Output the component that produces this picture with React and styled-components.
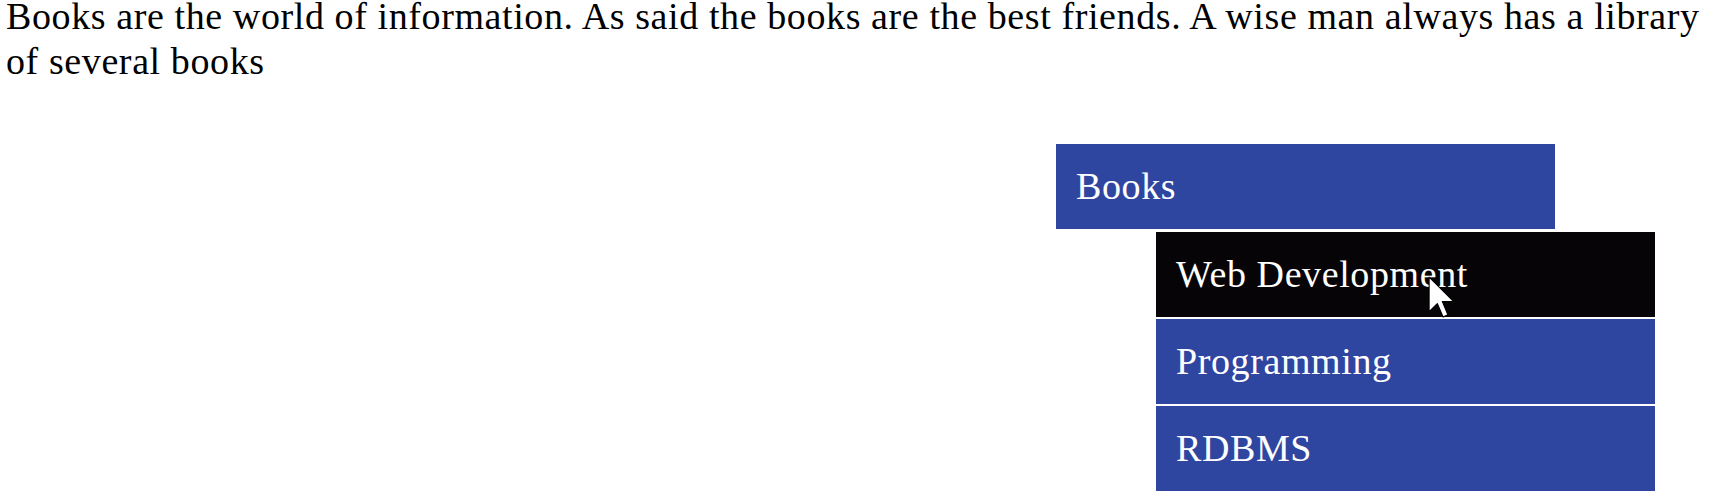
import React from 'react';
import styled, { createGlobalStyle } from 'styled-components';

const GlobalStyle = createGlobalStyle`
  html, body {
    margin: 0;
    padding: 0;
    background: #ffffff;
  }
  body {
    font-family: "Liberation Serif", "Times New Roman", serif;
    color: #000000;
    letter-spacing: 0.6px;
  }
`

const items = ['Web Development', 'Programming', 'RDBMS']

function App() {
  return (
    <Page>
      <GlobalStyle />
      <Intro>
        Books are the world of information. As said the books are the best friends. A wise man always has a library of several books
      </Intro>
      <MenuRow>
        <Menu>
          <MenuTitle>Books</MenuTitle>
          <SubMenu>
            {items.map((item, i) => (
              <SubItem key={item} active={i === 0}>
                {item}
                {i === 0 && <Pointer />}
              </SubItem>
            ))}
          </SubMenu>
        </Menu>
      </MenuRow>
    </Page>
  )
}

function Pointer() {
  return (
    <Cursor width="27" height="42" viewBox="0 0 12.5 19.5">
      <path
        d="M0.5 0.5 L0.5 16.5 L4.3 12.8 L7 19 L9.2 18 L6.6 11.8 L11.8 11.8 Z"
        fill="#ffffff"
        stroke="#000000"
        strokeWidth="0.5"
        strokeLinejoin="round"
      />
    </Cursor>
  )
}

const Page = styled.div`
  padding: 0 0 0 6px;
  overflow: hidden;
`

const Intro = styled.p`
  margin: -6px 0 0 0;
  padding-right: 8px;
  font-size: 38px;
  line-height: 45px;
`

const MenuRow = styled.div`
  display: flex;
  justify-content: flex-end;
  padding: 60px 70px 0 0;
`

const Menu = styled.div`
  width: 599px;
  display: flex;
  flex-direction: column;
`

const MenuTitle = styled.div`
  width: 499px;
  height: 85px;
  line-height: 85px;
  padding-left: 20px;
  box-sizing: border-box;
  background: #2f46a1;
  color: #ffffff;
  font-size: 38px;
`

const SubMenu = styled.div`
  margin: 3px 0 0 100px;
  display: flex;
  flex-direction: column;
  gap: 2px;
`

const SubItem = styled.div`
  position: relative;
  height: 85px;
  line-height: 85px;
  padding-left: 20px;
  box-sizing: border-box;
  background: ${props => (props.active ? '#060407' : '#2f46a1')};
  color: #ffffff;
  font-size: 38px;
`

const Cursor = styled.svg`
  position: absolute;
  left: 272px;
  top: 44px;
`

export default App
